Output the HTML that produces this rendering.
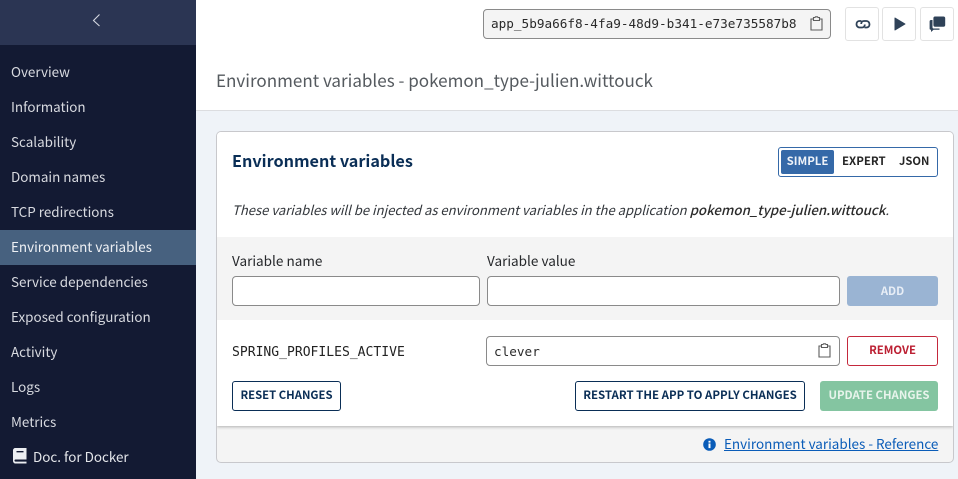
<!DOCTYPE html>
<html><head><meta charset="utf-8">
<style>
html,body{margin:0;padding:0;width:958px;height:479px;overflow:hidden;background:#fff;font-family:"Noto Sans CJK JP","Liberation Sans",sans-serif;}
.a{position:absolute;box-sizing:border-box;white-space:nowrap;}
.nav{left:11px;color:#d8dae0;font-size:13.45px;line-height:20px;}
.m{font-family:"DejaVu Sans Mono","Liberation Mono",monospace;}
.inp{background:#fff;border:1px solid #8a8a8a;border-radius:4px;}
.btn{border-radius:3px;font-weight:700;font-size:11.3px;line-height:27px;text-align:center;}
.ib{background:#fff;border:1px solid #e2e2e2;border-radius:3px;width:34px;height:34px;top:7px;}
</style></head><body>
<div class="a" style="left:0;top:0;width:196px;height:479px;background:#131a33"></div>
<div class="a" style="left:0;top:0;width:196px;height:45px;background:#2b3553"></div>
<svg class="a" style="left:90px;top:13px" width="12" height="14" viewBox="0 0 12 14"><path d="M9.5 1.5 L3.5 7.5 L9.5 13" fill="none" stroke="#d5d8e0" stroke-width="1.1"/></svg>
<div class="a" style="left:0;top:230px;width:196px;height:35px;background:#47617f"></div>
<div class="a nav" style="top:61px">Overview</div>
<div class="a nav" style="top:96px">Information</div>
<div class="a nav" style="top:131px">Scalability</div>
<div class="a nav" style="top:166px">Domain names</div>
<div class="a nav" style="top:201px">TCP redirections</div>
<div class="a nav" style="top:236px;color:#eef0f4">Environment variables</div>
<div class="a nav" style="top:271px">Service dependencies</div>
<div class="a nav" style="top:306px">Exposed configuration</div>
<div class="a nav" style="top:341px">Activity</div>
<div class="a nav" style="top:376px">Logs</div>
<div class="a nav" style="top:411px">Metrics</div>
<svg class="a" style="left:13px;top:448px" width="14" height="16" viewBox="0 0 14 16"><path fill-rule="evenodd" d="M2.5 0H13.5V11.5H2.5C1.7 11.5 1.5 12 1.5 12.5S1.8 13.6 2.5 13.6H13.5V15.5H2.5C1 15.5 0 14.2 0 12.7V2.5C0 1 1 0 2.5 0ZM3.5 3V4.4H10.5V3Z" fill="#eceef2"/></svg>
<div class="a nav" style="left:33px;top:446px;color:#e4e6ea">Doc. for Docker</div>

<div class="a" style="left:196px;top:110px;width:762px;height:369px;background:#eff3f8;border-top:1px solid #dcdde0"></div>

<div class="a m" style="left:483px;top:9px;width:348px;height:30px;background:#f4f4f4;border:1px solid #8a8a8a;border-radius:4px;font-size:12.7px;line-height:28px;padding-left:7px;color:#2a2a2a">app_5b9a66f8-4fa9-48d9-b341-e73e735587b8</div>
<svg class="a" style="left:810px;top:16px" width="13" height="15" viewBox="0 0 13 15"><path d="M1 3H3.5V4.5H9.5V3H12V14H1Z M3.5 3V1.5H5L5.5 .8H7.5L8 1.5H9.5V3" fill="none" stroke="#5c5c5c" stroke-width="1.1"/></svg>
<div class="a ib" style="left:845px"></div>
<div class="a ib" style="left:882px"></div>
<div class="a ib" style="left:920px"></div>
<svg class="a" style="left:855px;top:19px" width="16" height="11" viewBox="0 0 16 11"><path d="M6.5 2H4.5C2.8 2 1.5 3.4 1.5 5.2S2.8 8.5 4.5 8.5H7C8.7 8.5 9.8 7.2 9.8 5.5 M9.5 8.5H11.5C13.2 8.5 14.5 7.1 14.5 5.3S13.2 2 11.5 2H9C7.3 2 6.2 3.3 6.2 5" fill="none" stroke="#2f4258" stroke-width="1.8"/></svg>
<svg class="a" style="left:894px;top:17px" width="12" height="14" viewBox="0 0 12 14"><path d="M1 1V13L11 7Z" fill="#2f4258" stroke="#2f4258" stroke-width="1" stroke-linejoin="round"/></svg>
<svg class="a" style="left:929px;top:16px" width="17" height="17" viewBox="0 0 17 17"><path d="M3.5 4H2C1 4 .6 4.8 .6 5.6V12.5C.6 13.4 1.1 13.8 2 13.8V16L4.6 13.8H10.5V12.5H4.5C3.8 12.5 3.5 12 3.5 11.3Z" fill="#2f4258"/><path d="M6 0.5H14.5C15.6 0.5 16.2 1.2 16.2 2.2V9C16.2 10 15.6 10.8 14.5 10.8H6C4.9 10.8 4.4 10 4.4 9V2.2C4.4 1.2 4.9 .5 6 .5Z" fill="#2f4258"/></svg>

<div class="a" style="left:216px;top:68px;font-size:17.05px;line-height:24px;color:#555a5f">Environment variables - pokemon_type-julien.wittouck</div>

<div class="a" style="left:216px;top:131px;width:738px;height:332px;background:#f4f4f4;border:1px solid #c8c8cc;border-radius:5px"></div>
<div class="a" style="left:217px;top:132px;width:736px;height:105px;background:#fff;border-radius:4px 4px 0 0"></div>
<div class="a" style="left:217px;top:320px;width:736px;height:106px;background:#fff;box-shadow:0 1px 3px rgba(0,0,0,.28);clip-path:inset(0 0 -6px 0)"></div>

<div class="a" style="left:232px;top:149px;font-size:16.2px;line-height:22px;font-weight:700;color:#0a2e56">Environment variables</div>
<div class="a" style="left:778px;top:147px;width:160px;height:30px;border:1px solid #3569a8;border-radius:3px;background:#fff"></div>
<div class="a" style="left:781px;top:150px;width:53px;height:24px;background:#3569a8;border-radius:2px;color:#eef2f8;font-weight:700;font-size:11.4px;line-height:23px;text-align:center">SIMPLE</div>
<div class="a" style="left:842px;top:150px;color:#262626;font-weight:700;font-size:11.45px;line-height:23px">EXPERT</div>
<div class="a" style="left:899px;top:150px;color:#262626;font-weight:700;font-size:11.2px;line-height:23px">JSON</div>

<div class="a" style="left:232px;top:199px;font-size:13.08px;line-height:22px;color:#33373c;font-style:italic">These variables will be injected as environment variables in the application <b style="font-weight:500;color:#2b2b2b;font-size:13.28px">pokemon_type-julien.wittouck</b>.</div>

<div class="a" style="left:232px;top:250px;font-size:13.55px;line-height:20px;color:#26282b">Variable name</div>
<div class="a" style="left:487px;top:250px;font-size:13.55px;line-height:20px;color:#26282b">Variable value</div>
<div class="a inp" style="left:232px;top:276px;width:248px;height:30px"></div>
<div class="a inp" style="left:487px;top:276px;width:353px;height:30px"></div>
<div class="a btn" style="left:847px;top:276px;width:91px;height:30px;background:#9ab4d3;color:#e8eef6;line-height:31px">ADD</div>

<div class="a m" style="left:232px;top:342px;font-size:13.05px;line-height:20px;color:#222;padding-top:1px">SPRING_PROFILES_ACTIVE</div>
<div class="a m inp" style="left:486px;top:336px;width:354px;height:30px;font-size:12.7px;line-height:30px;padding-left:7px;color:#2a2a2a">clever</div>
<svg class="a" style="left:818px;top:343px" width="13" height="15" viewBox="0 0 13 15"><path d="M1 3H3.5V4.5H9.5V3H12V14H1Z M3.5 3V1.5H5L5.5 .8H7.5L8 1.5H9.5V3" fill="none" stroke="#5c5c5c" stroke-width="1.1"/></svg>
<div class="a btn" style="left:847px;top:336px;width:91px;height:30px;border:1px solid #c4283c;color:#bc2033">REMOVE</div>

<div class="a btn" style="left:232px;top:381px;width:109px;height:30px;border:1px solid #0a2e56;color:#0a2e56">RESET CHANGES</div>
<div class="a btn" style="left:575px;top:381px;width:230px;height:30px;border:1px solid #0a2e56;color:#0a2e56;font-size:11.45px">RESTART THE APP TO APPLY CHANGES</div>
<div class="a btn" style="left:820px;top:381px;width:118px;height:30px;background:#84c5a1;color:#e8f4ec;line-height:28px;font-size:11.35px">UPDATE CHANGES</div>

<svg class="a" style="left:703px;top:438px" width="13" height="13" viewBox="0 0 13 13"><circle cx="6.5" cy="6.5" r="6.3" fill="#0a5cb8"/><rect x="5.5" y="5.5" width="2" height="4.6" fill="#fff"/><rect x="5.5" y="2.8" width="2" height="1.8" fill="#fff"/></svg>
<div class="a" style="left:724px;top:433px;font-size:13.48px;line-height:20px;color:#0a5cb8;text-decoration:underline">Environment variables - Reference</div>
</body></html>
